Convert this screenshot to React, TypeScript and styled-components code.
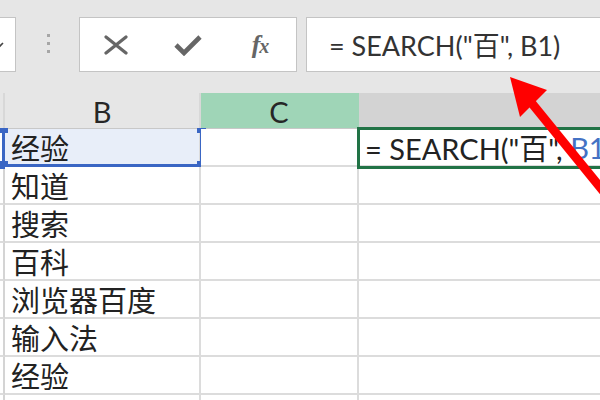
import React from "react";
import styled, { createGlobalStyle } from "styled-components";

const Global = createGlobalStyle`
  html, body { margin: 0; padding: 0; background: #ffffff; overflow: hidden; }
  #root { width: 600px; height: 400px; overflow: hidden; }
`;

const Page = styled.div`
  position: relative;
  width: 600px;
  height: 400px;
  overflow: hidden;
  background: #ffffff;
  font-family: Lato, "Noto Sans CJK SC", sans-serif;
`;

const Toolbar = styled.div`
  height: 93px;
  box-sizing: border-box;
  padding-top: 17px;
  background: #e6e6e6;
  display: flex;
  align-items: flex-start;
`;

const NameBox = styled.div`
  flex: none;
  width: 80px;
  height: 55px;
  margin-left: -64px;
  box-sizing: border-box;
  border: 1px solid #c4c4c4;
  background: #ffffff;
  display: flex;
  align-items: center;
  justify-content: flex-end;
  padding-right: 11px;
`;

const Dots = styled.div`
  flex: none;
  margin-left: 31px;
  margin-top: 17px;
  display: flex;
  flex-direction: column;
  gap: 5px;
`;

const Dot = styled.span`
  width: 3px;
  height: 3px;
  background: #a6a6a6;
`;

const FuncBox = styled.div`
  flex: none;
  margin-left: 29px;
  width: 218px;
  height: 55px;
  box-sizing: border-box;
  border: 1px solid #c4c4c4;
  background: #ffffff;
  display: grid;
  grid-template-columns: 72px 72px 72px;
  align-items: center;
  justify-items: center;
`;

const FxText = styled.span`
  font-family: "Liberation Serif", serif;
  font-style: italic;
  font-weight: bold;
  font-size: 26px;
  color: #666666;
  letter-spacing: -1px;
  line-height: 1;
`;

const FxSub = styled.span`
  font-size: 20px;
`;

const FormulaBox = styled.div`
  flex: none;
  margin-left: 9px;
  width: 320px;
  height: 55px;
  box-sizing: border-box;
  border: 1px solid #c4c4c4;
  background: #ffffff;
  display: flex;
  align-items: center;
  padding-left: 22px;
  font-size: 27px;
  color: #333333;
  white-space: pre;
`;

const Sheet = styled.div`
  display: grid;
  grid-template-columns: 5px 196px 158px 1fr;
  grid-template-rows: 36px repeat(8, 38px);
`;

const HeaderCell = styled.div<{ $tone: "plain" | "active" | "selected" }>`
  box-sizing: border-box;
  display: flex;
  align-items: center;
  justify-content: center;
  padding-top: 2px;
  font-size: 29px;
  color: #262626;
  background: ${(p) =>
    p.$tone === "active" ? "#9fd5b7" : p.$tone === "selected" ? "#d3d3d3" : "#e6e6e6"};
  border-right: 2px solid ${(p) => (p.$tone === "active" ? "#9fd5b7" : "#d8d8d8")};
  border-bottom: 1px solid #c8c8c8;
`;

const RowNum = styled.div`
  box-sizing: border-box;
  background: #ffffff;
  border-right: 2px solid #d4d4d4;
  border-bottom: 2px solid #dcdcdc;
`;

const Cell = styled.div<{ $ref?: boolean; $active?: boolean }>`
  position: relative;
  box-sizing: border-box;
  display: flex;
  align-items: center;
  padding-left: ${(p) => (p.$active ? "6px" : "6px")};
  font-family: ${(p) =>
    p.$active ? 'Lato, "Noto Sans CJK SC", sans-serif' : '"Noto Sans CJK SC", sans-serif'};
  font-size: ${(p) => (p.$active ? "29px" : "29px")};
  color: #222222;
  white-space: pre;
  overflow: visible;
  background: ${(p) => (p.$ref ? "#e8eef9" : "#ffffff")};
  border-right: 2px solid #dcdcdc;
  border-bottom: 2px solid #dcdcdc;
  outline: ${(p) => (p.$active ? "3px solid #217346" : "none")};
  outline-offset: -1px;
  z-index: ${(p) => (p.$active ? 2 : 1)};
`;

const RefFrame = styled.div`
  position: absolute;
  left: -3px;
  right: -4px;
  top: 0;
  bottom: -2px;
  border-left: 3px solid #3a66c4;
  border-right: 3px solid #3a66c4;
  border-bottom: 3px solid #3a66c4;
  pointer-events: none;
`;

const Handle = styled.span<{ $x: "l" | "r"; $y: "t" | "b" }>`
  position: absolute;
  width: 9px;
  height: 8px;
  background: #3a66c4;
  ${(p) => (p.$x === "l" ? "left: -6px;" : "right: -6px;")}
  ${(p) => (p.$y === "t" ? "top: -1px; height: 5px;" : "bottom: -5px;")}
`;

const RefText = styled.span`
  color: #4472c4;
`;

const ArrowLayer = styled.svg`
  position: absolute;
  left: 0;
  top: 0;
  pointer-events: none;
  z-index: 5;
`;

const words = ["经验", "知道", "搜索", "百科", "浏览器百度", "输入法", "经验", ""];

export default function App() {
  return (
    <Page>
      <Global />
      <Toolbar>
        <NameBox>
          <svg width="9" height="6" viewBox="0 0 9 6">
            <path d="M1 1 L4.5 4.5 L8 1" fill="none" stroke="#444" strokeWidth="1.6" />
          </svg>
        </NameBox>
        <Dots>
          <Dot />
          <Dot />
          <Dot />
        </Dots>
        <FuncBox>
          <svg width="24" height="20" viewBox="0 0 24 20">
            <path d="M2 2 L22 18 M22 2 L2 18" stroke="#666" strokeWidth="3.2" strokeLinecap="round" />
          </svg>
          <svg width="28" height="22" viewBox="0 0 28 22">
            <path d="M2 11 L10 19 L26 3" fill="none" stroke="#666" strokeWidth="4.6" strokeLinejoin="miter" />
          </svg>
          <FxText>
            f<FxSub>x</FxSub>
          </FxText>
        </FuncBox>
        <FormulaBox>{'= SEARCH("百", B1)'}</FormulaBox>
      </Toolbar>
      <Sheet>
        <HeaderCell $tone="plain" />
        <HeaderCell $tone="plain">B</HeaderCell>
        <HeaderCell $tone="active">C</HeaderCell>
        <HeaderCell $tone="selected" />
        {words.map((w, i) => (
          <React.Fragment key={i}>
            <RowNum />
            <Cell $ref={i === 0}>
              {w}
              {i === 0 && (
                <RefFrame>
                  <Handle $x="l" $y="t" />
                  <Handle $x="r" $y="t" />
                  <Handle $x="l" $y="b" />
                  <Handle $x="r" $y="b" />
                </RefFrame>
              )}
            </Cell>
            <Cell />
            {i === 0 ? (
              <Cell $active>
                {'= SEARCH("百", '}
                <RefText>B1)</RefText>
              </Cell>
            ) : (
              <Cell />
            )}
          </React.Fragment>
        ))}
      </Sheet>
      <ArrowLayer width="600" height="400" viewBox="0 0 600 400">
        <line x1="530" y1="101" x2="612" y2="202" stroke="#ff0000" strokeWidth="9" />
        <polygon points="510,77 547,90 520,117" fill="#ff0000" />
      </ArrowLayer>
    </Page>
  );
}
